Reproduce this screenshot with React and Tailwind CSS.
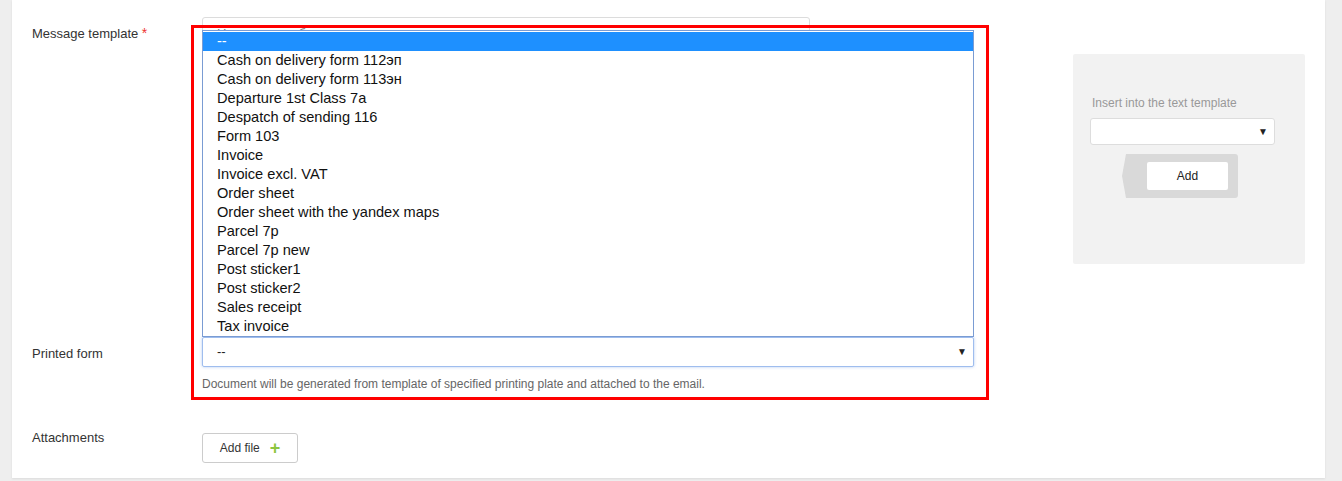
import React from 'react';

const options = [
  '--',
  'Cash on delivery form 112эп',
  'Cash on delivery form 113эн',
  'Departure 1st Class 7a',
  'Despatch of sending 116',
  'Form 103',
  'Invoice',
  'Invoice excl. VAT',
  'Order sheet',
  'Order sheet with the yandex maps',
  'Parcel 7p',
  'Parcel 7p new',
  'Post sticker1',
  'Post sticker2',
  'Sales receipt',
  'Tax invoice',
];

const Arrow = () => <span className="text-[10px] text-[#222] leading-none">▼</span>;

const App = () => {
  return (
    <div className="flex h-[481px] w-[1342px] bg-[#eeeeee] font-['Liberation_Sans',Arial,sans-serif] text-[13px] text-[#333] overflow-hidden">
      <div className="ml-[12px] w-[1313px] h-[478px] bg-white shadow-[0_1px_2px_rgba(0,0,0,0.08)] pt-[17px] pl-[20px] flex">
        <div className="flex flex-col w-[790px] shrink-0">
          {/* message template */}
          <div className="flex">
            <div className="w-[170px] shrink-0 pt-[6px]">
              Message template <span className="text-[#e33] text-[14px]">*</span>
            </div>
            <div className="w-[608px] h-[305px] shrink-0 border border-[#dcdcdc] rounded-[3px] px-[14px] pt-[6px] text-[#777]">
              Не указан шаблон письма
            </div>
          </div>

          {/* printed form */}
          <div className="flex mt-[15px]">
            <div className="w-[170px] shrink-0 pt-[7px]">Printed form</div>
            <div className="relative shrink-0">
              <div className="absolute -left-[11px] -top-[312px] w-[798px] h-[375px] border-[3px] border-[#ff0000] z-20 pointer-events-none" />
              <div className="absolute left-0 bottom-full w-[772px] bg-white border border-[#7a9cd3] pt-[1px] z-10 text-[14.6px] text-[#111] leading-[19px]">
                {options.map((o, i) => (
                  <div key={o} className={`h-[19px] pl-[14px] ${i === 0 ? 'bg-[#1e90ff] text-white' : ''}`}>{o}</div>
                ))}
              </div>
              <div className="w-[772px] h-[30px] border border-[#9fbdee] rounded-[2px] shadow-[0_0_3px_rgba(100,150,230,0.5)] flex items-center justify-between pl-[14px] pr-[6px] text-[#222]">
                <span>--</span>
                <Arrow />
              </div>
              <div className="mt-[8px] text-[12px] text-[#666]">
                Document will be generated from template of specified printing plate and attached to the email.
              </div>
            </div>
          </div>

          {/* attachments */}
          <div className="flex mt-[40px]">
            <div className="w-[170px] shrink-0 -mt-[5px]">Attachments</div>
            <button className="w-[96px] h-[30px] border border-[#cccccc] rounded-[3px] bg-white flex items-center justify-center gap-[10px] text-[12px] text-[#333]">
              Add file
              <span className="text-[#8dc63f] text-[18px] font-bold leading-none">+</span>
            </button>
          </div>
        </div>

        {/* sidebar */}
        <div className="ml-[251px] mt-[37px] w-[232px] h-[210px] shrink-0 bg-[#f2f2f2] rounded-[2px] pl-[17px] pr-[30px] pt-[40px]">
          <div className="ml-[2px] text-[12px] text-[#999]">Insert into the text template</div>
          <div className="mt-[6px] w-[185px] h-[27px] bg-white border border-[#dddddd] rounded-[3px] flex items-center justify-end pr-[6px]">
            <Arrow />
          </div>
          <div className="mt-[9px] ml-[40px] flex">
            <div className="relative w-[108px] h-[44px] bg-[#d9d9d9] rounded-r-[3px] flex items-center justify-end pr-[10px]">
              <div className="absolute -left-[8px] top-0 h-[44px] w-[10px] bg-[#d9d9d9] [clip-path:polygon(100%_0,100%_100%,40%_100%,0_50%,40%_0)]" />
              <button className="w-[81px] h-[28px] bg-white rounded-[2px] text-[12px] text-[#222]">Add</button>
            </div>
          </div>
        </div>
      </div>
    </div>
  );
};

export default App;
